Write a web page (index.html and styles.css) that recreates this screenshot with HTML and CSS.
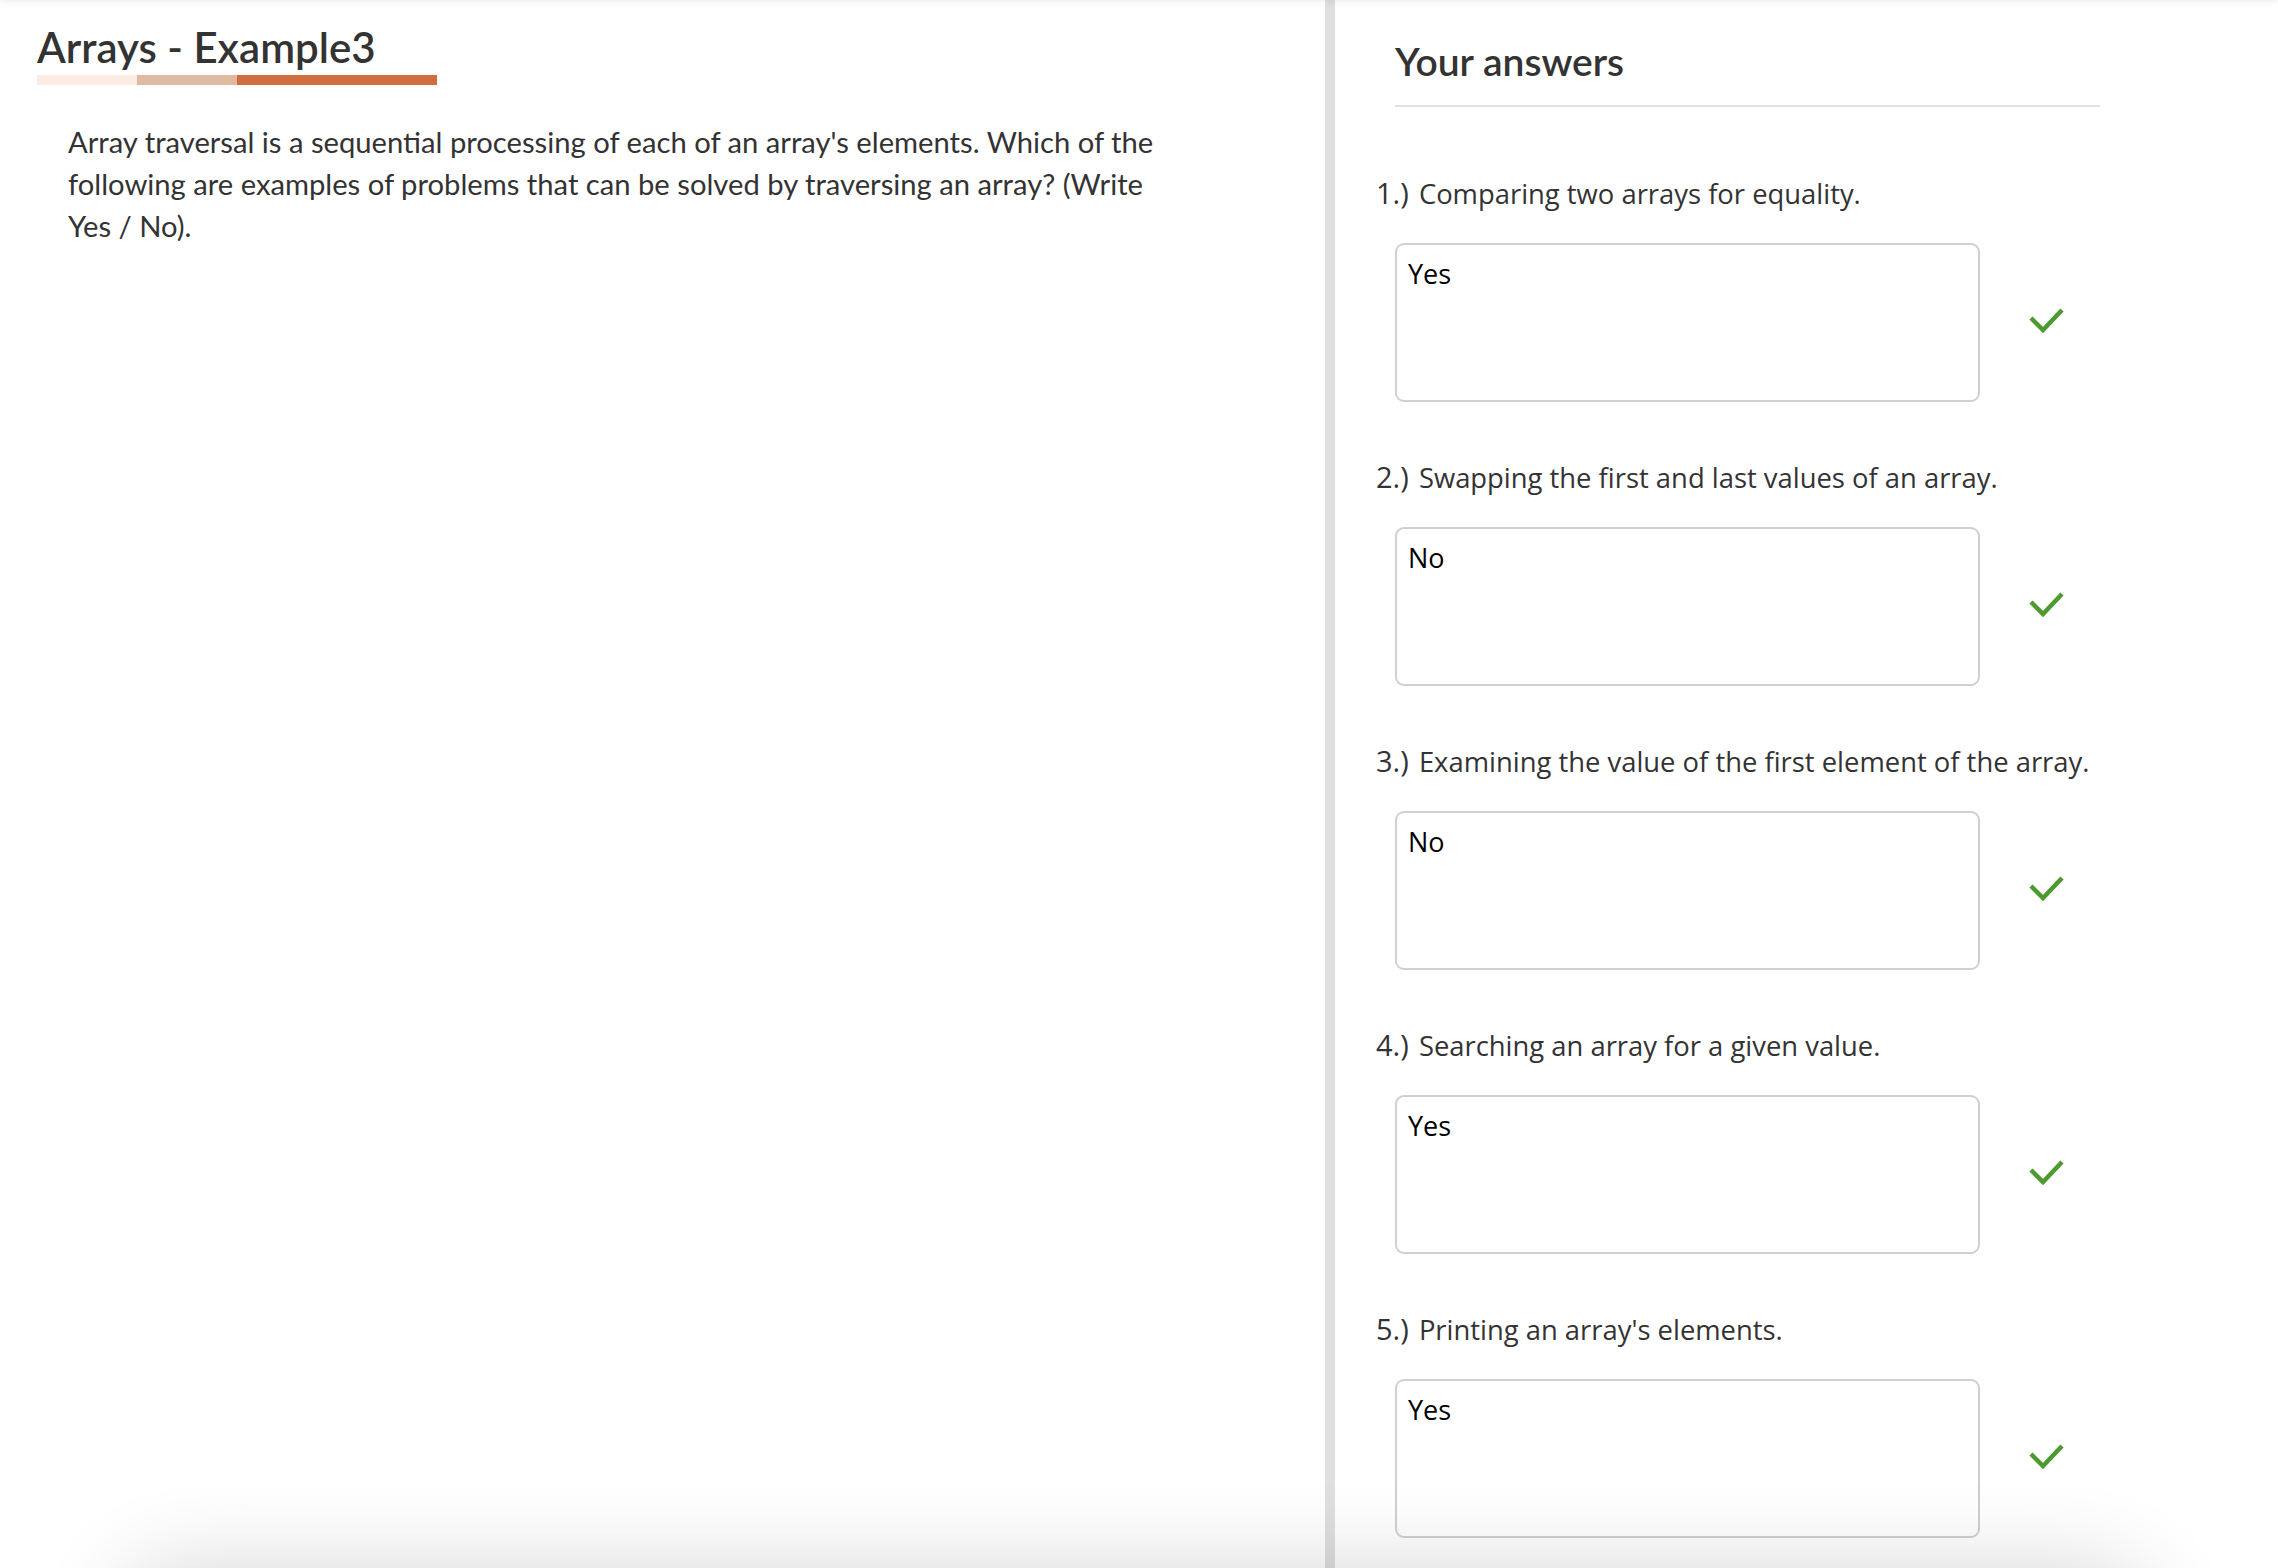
FILE: index.html
```html
<!DOCTYPE html>
<html lang="en">
<head>
<meta charset="utf-8">
<title>Arrays - Example3</title>
<link rel="stylesheet" href="styles.css">
</head>
<body>
<div class="page">
  <main class="lesson">
    <h1 class="lesson-title">Arrays - Example3</h1>
    <div class="title-bar"><span class="seg seg-1"></span><span class="seg seg-2"></span><span class="seg seg-3"></span></div>
    <p class="lesson-text">Array traversal is a sequential processing of each of an array's elements. Which of the following are examples of problems that can be solved by traversing an array? (Write Yes / No).</p>
  </main>
  <aside class="answers">
    <div class="answers-head"><h2 class="answers-title">Your answers</h2></div>
    <ol class="answer-list">
      <li class="answer">
        <div class="answer-q"><span class="answer-num">1.)</span> Comparing two arrays for equality.</div>
        <div class="answer-row">
          <textarea class="answer-box" readonly>Yes</textarea>
          <svg class="check" viewBox="0 0 35 26" width="35" height="26"><polyline points="2,11 14,23 33,3" /></svg>
        </div>
      </li>
      <li class="answer">
        <div class="answer-q"><span class="answer-num">2.)</span> Swapping the first and last values of an array.</div>
        <div class="answer-row">
          <textarea class="answer-box" readonly>No</textarea>
          <svg class="check" viewBox="0 0 35 26" width="35" height="26"><polyline points="2,11 14,23 33,3" /></svg>
        </div>
      </li>
      <li class="answer">
        <div class="answer-q"><span class="answer-num">3.)</span> Examining the value of the first element of the array.</div>
        <div class="answer-row">
          <textarea class="answer-box" readonly>No</textarea>
          <svg class="check" viewBox="0 0 35 26" width="35" height="26"><polyline points="2,11 14,23 33,3" /></svg>
        </div>
      </li>
      <li class="answer">
        <div class="answer-q"><span class="answer-num">4.)</span> Searching an array for a given value.</div>
        <div class="answer-row">
          <textarea class="answer-box" readonly>Yes</textarea>
          <svg class="check" viewBox="0 0 35 26" width="35" height="26"><polyline points="2,11 14,23 33,3" /></svg>
        </div>
      </li>
      <li class="answer">
        <div class="answer-q"><span class="answer-num">5.)</span> Printing an array's elements.</div>
        <div class="answer-row">
          <textarea class="answer-box" readonly>Yes</textarea>
          <svg class="check" viewBox="0 0 35 26" width="35" height="26"><polyline points="2,11 14,23 33,3" /></svg>
        </div>
      </li>
    </ol>
  </aside>
</div>
<div class="shade-top"></div>
<div class="shade-bottom"></div>
</body>
</html>
```

FILE: styles.css
```css
html, body {
  margin: 0;
  padding: 0;
  background: #ffffff;
}

body {
  color: #333333;
  font-family: Lato, "Open Sans", sans-serif;
  overflow: hidden;
}

.page {
  display: flex;
  height: 100vh;
}

/* Left: lesson */
.lesson {
  flex: 0 0 1325px;
  box-sizing: border-box;
  padding: 22px 0 0 37px;
}

.lesson-title {
  margin: 0;
  font-size: 42px;
  font-weight: 600;
  line-height: normal;
  color: #333333;
}

.title-bar {
  display: flex;
  width: 400px;
  height: 10px;
  margin-top: 3px;
}

.seg-1 { flex: 0 0 100px; background: #fcebe2; }
.seg-2 { flex: 0 0 100px; background: #dfb9a2; }
.seg-3 { flex: 1 1 auto; background: #d06e40; }

.lesson-text {
  margin: 36px 0 0 31px;
  max-width: 1110px;
  font-size: 29.2px;
  line-height: 42px;
  color: #333333;
}

/* Right: answers */
.answers {
  flex: 1 1 auto;
  border-left: 10px solid #dfdfdf;
  padding: 38px 0 0 41px;
  font-family: "Open Sans", sans-serif;
}

.answers-head {
  margin-left: 19px;
  width: 705px;
  padding-bottom: 21px;
  border-bottom: 2px solid #e1e1e1;
}

.answers-title {
  margin: 0;
  font-family: Lato, "Open Sans", sans-serif;
  font-size: 39px;
  font-weight: 600;
  line-height: normal;
  color: #333333;
}

.answer-list {
  list-style: none;
  margin: 66px 0 0 0;
  padding: 0;
}

.answer-q {
  font-size: 27.4px;
  line-height: 40px;
  color: #333333;
}

.answer-num {
  font-size: 29px;
  margin-right: 3px;
}

.answer-row {
  display: flex;
  align-items: center;
  margin: 29px 0 55px 19px;
}

.answer-box {
  display: block;
  width: 585px;
  height: 159px;
  box-sizing: border-box;
  border: 2px solid #d0d0d0;
  border-radius: 9px;
  padding: 10px 11px;
  margin: 0;
  font-family: "Open Sans", sans-serif;
  font-size: 27px;
  line-height: normal;
  color: #000000;
  background: #ffffff;
  resize: none;
  outline: none;
  overflow: hidden;
}

.check {
  margin-left: 49px;
  margin-bottom: 6px;
  flex: none;
}

.check polyline {
  fill: none;
  stroke: #4e9a2f;
  stroke-width: 4.5;
}

/* Edge shadows cast by surrounding chrome */
.shade-top {
  position: fixed;
  left: 0;
  right: 0;
  top: -20px;
  height: 20px;
  box-shadow: 0 0 10px rgba(0, 0, 0, 0.1);
}

.shade-bottom {
  position: fixed;
  left: 120px;
  width: 2030px;
  top: 100%;
  height: 200px;
  border-radius: 60px;
  box-shadow: 0 0 90px rgba(0, 0, 0, 0.16);
}
```
